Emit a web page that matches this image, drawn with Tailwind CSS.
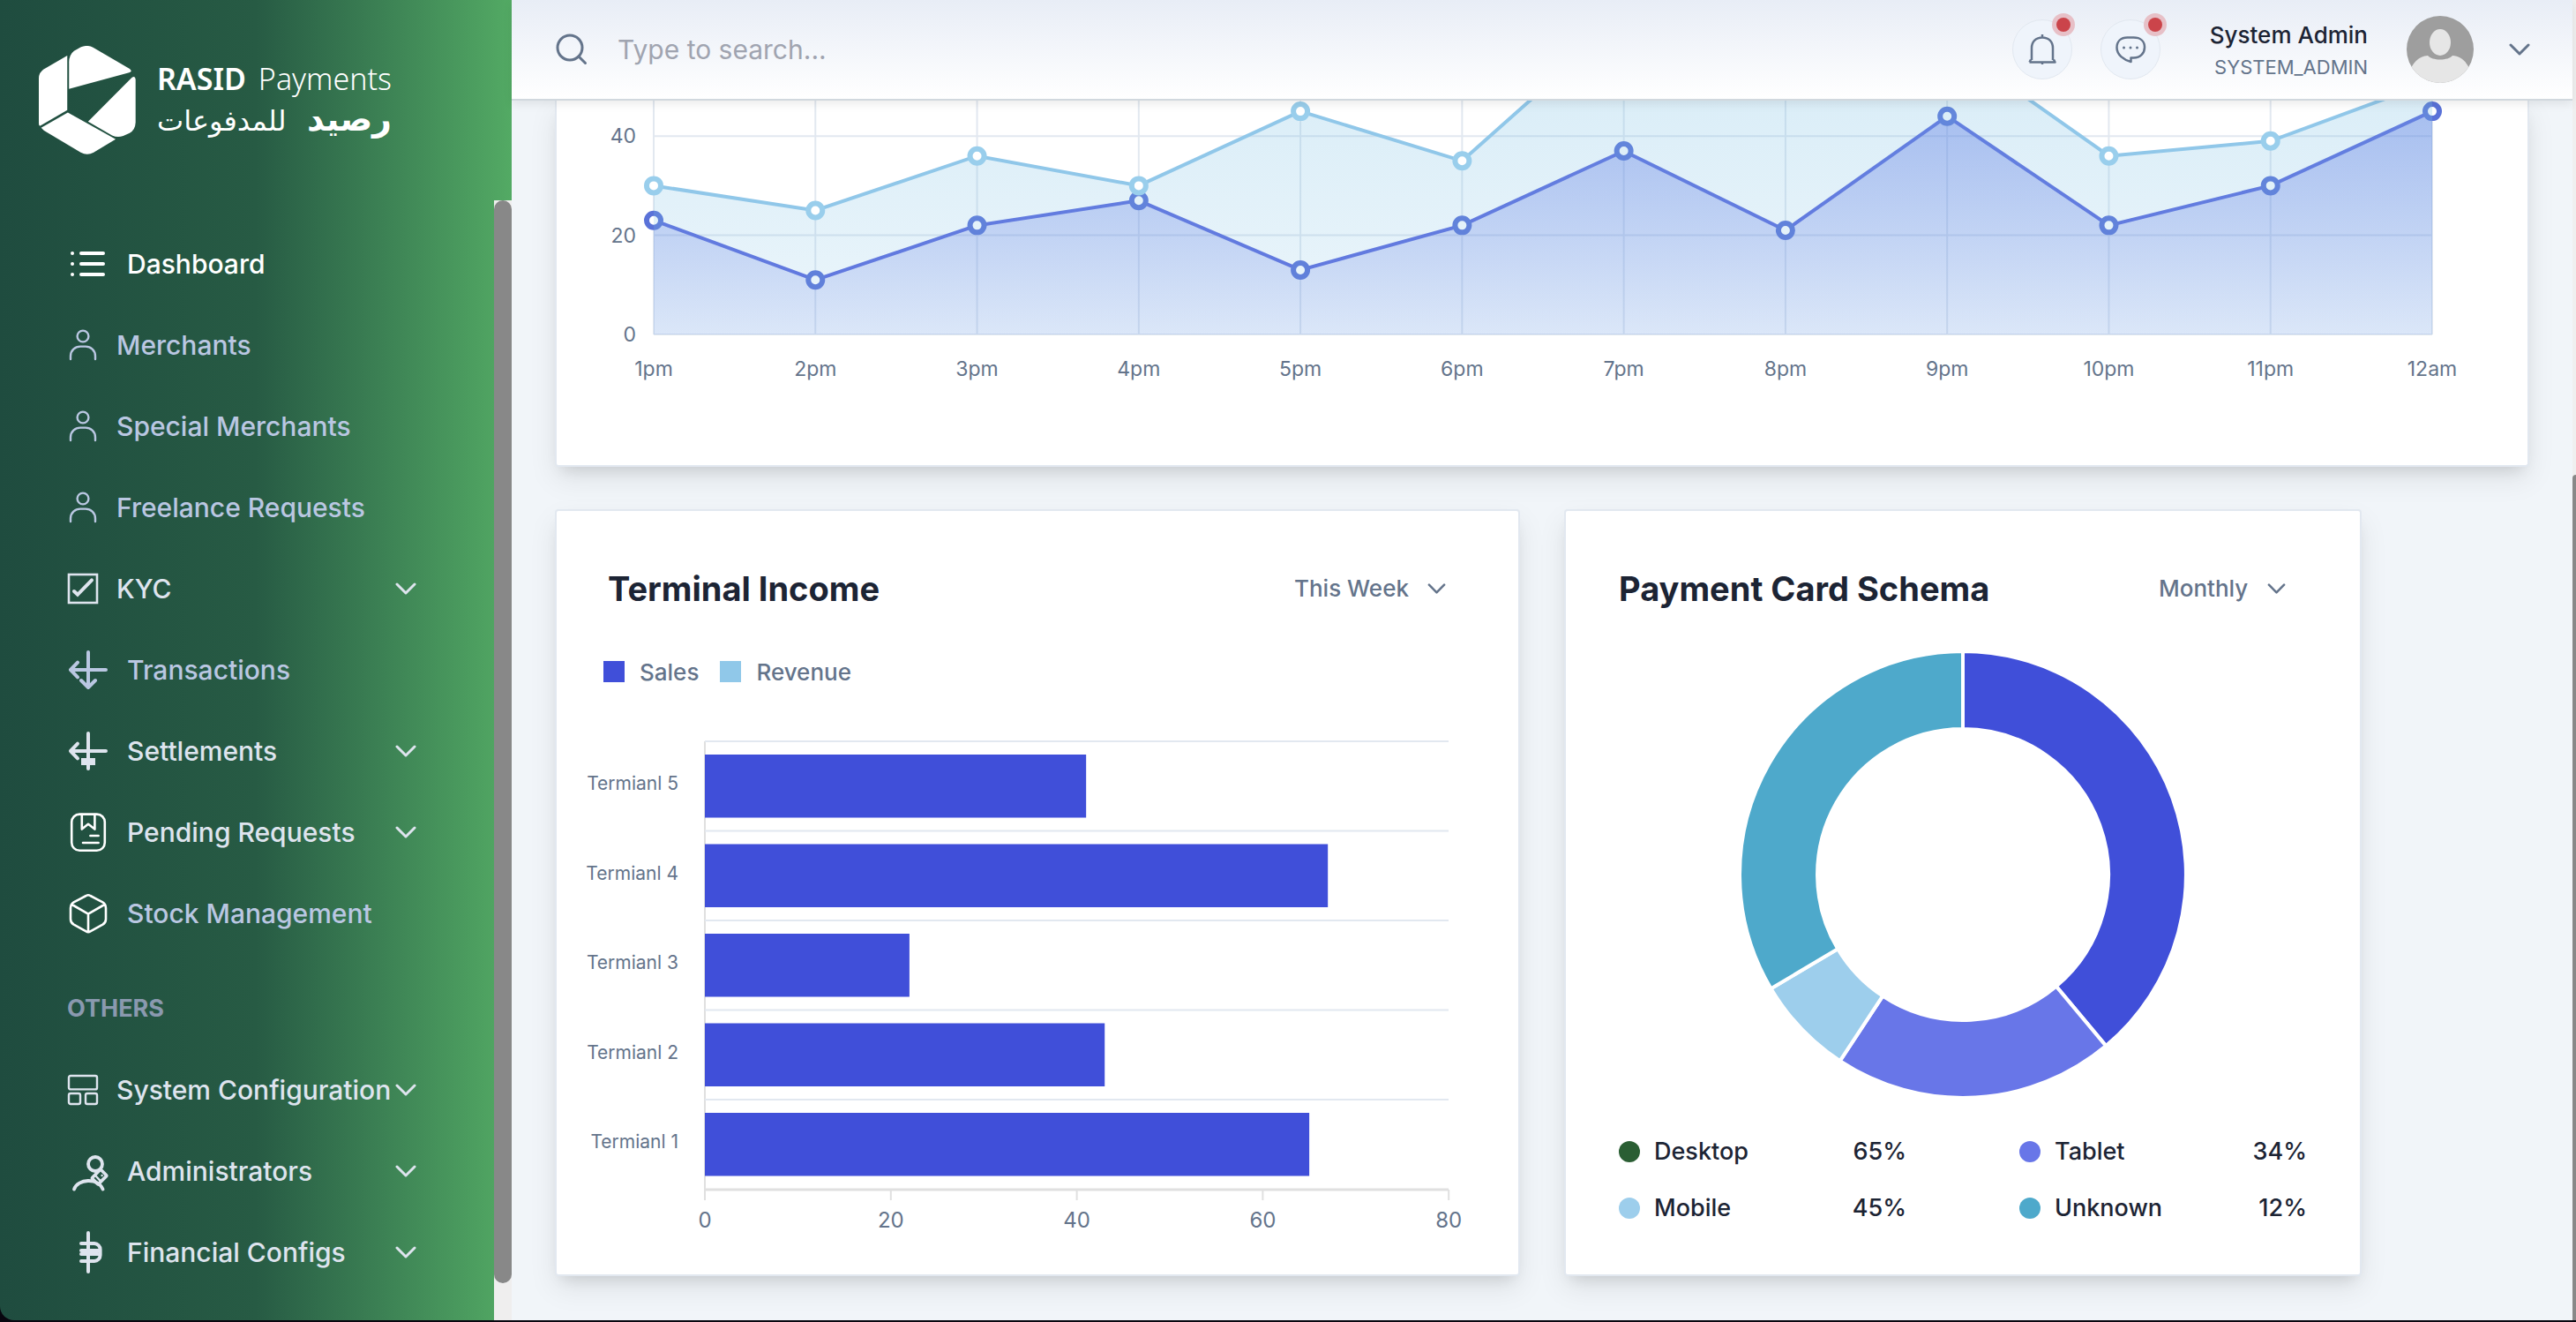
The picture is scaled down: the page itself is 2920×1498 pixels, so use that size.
<!DOCTYPE html>
<html lang="en">
<head>
<meta charset="utf-8">
<title>RASID Payments – Dashboard</title>
<script src="https://cdn.jsdelivr.net/npm/@tailwindcss/browser@4"></script>
</head>
<body class="bg-[#08060f] font-['Inter',sans-serif] text-[#1c2434]">
<svg class="hidden" aria-hidden="true">
  <symbol id="chevron" viewBox="0 0 24 14"><path d="M2 2l10 10L22 2" fill="none" stroke="currentColor" stroke-width="3" stroke-linecap="round" stroke-linejoin="round"/></symbol>
  <symbol id="person" viewBox="0 0 18 18"><g fill="none" stroke="currentColor" stroke-width="1.200" stroke-linecap="round"><circle cx="9" cy="4" r="3.200"/><path d="M2 17v-1.800C2 12 4.600 9.800 7.500 9.800h3c2.900 0 5.500 2.200 5.500 5.400V17"/></g></symbol>
</svg>

<div class="flex h-screen overflow-hidden pb-0.5">

  <!-- Sidebar -->
  <aside class="flex w-[580px] shrink-0 flex-col overflow-hidden rounded-bl-2xl bg-linear-to-r from-[#1f4c3f] via-[#275b44] to-[#53aa64]">
    <a href="#" class="flex h-[227px] shrink-0 items-start gap-6 pt-[52px] pl-[44px] text-white">
      <svg class="h-[123px] w-[110px]" viewBox="42 36 331 370" fill="currentColor" aria-hidden="true">
        <path d="M145 183V92Q145 66 162 53L186 40Q207 31 227 41L352 114Q362 122 350 127Z"/>
        <path d="M139 69V255L47 308Q42 310 42 300V147Q42 126 60 115Z"/>
        <path d="M50 315L141 263L304 354L229 399Q207 411 185 399L60 325Z"/>
        <path d="M210 294L359 144Q371 136 372 150V297Q371 322 352 333L330 343Q310 350 292 341Z"/>
      </svg>
      <span class="flex w-[266px] flex-col pt-[14px] font-['Noto_Sans',sans-serif]">
        <span class="flex justify-between text-[34px] leading-[46px] whitespace-nowrap"><b class="font-semibold">RASID</b><span class="font-light">Payments</span></span>
        <span lang="ar" dir="rtl" class="flex items-baseline justify-between font-['DejaVu_Sans',sans-serif] text-[32px] leading-[46px] whitespace-nowrap"><b class="text-[38px]">رصيد</b><span>للمدفوعات</span></span>
      </span>
    </a>

    <div class="flex min-h-0 flex-1">
      <nav class="flex-1 overflow-hidden pt-8 pr-[88px] pl-[76px] text-[30px] font-medium whitespace-nowrap text-[#dee4ee]">
        <ul class="flex flex-col gap-3">
          <li><a href="#" class="flex h-20 items-center gap-5 text-white">
            <svg class="size-12 shrink-0" viewBox="0 0 24 24" fill="none" stroke="currentColor" stroke-width="2" stroke-linecap="round"><path d="M8 6h12.500M8 12h12.500M8 18h12.500M3 6h.01M3 12h.01M3 18h.01"/></svg>
            Dashboard</a></li>
          <li><a href="#" class="flex h-20 items-center gap-5 text-[#bac7e2]"><svg class="size-9 shrink-0"><use href="#person"/></svg>Merchants</a></li>
          <li><a href="#" class="flex h-20 items-center gap-5 text-[#bac7e2]"><svg class="size-9 shrink-0"><use href="#person"/></svg>Special Merchants</a></li>
          <li><a href="#" class="flex h-20 items-center gap-5 text-[#bac7e2]"><svg class="size-9 shrink-0"><use href="#person"/></svg>Freelance Requests</a></li>
          <li><a href="#" class="flex h-20 items-center gap-5">
            <svg class="size-9 shrink-0" viewBox="0 0 18 18" fill="none" stroke="currentColor"><rect x="1" y="1" width="16" height="16" stroke-width="1.300"/><path d="M4 10.500l2 1.900 8-8.200" stroke-width="2" stroke-linecap="round"/></svg>
            KYC<svg class="ml-auto h-3.5 w-6 shrink-0"><use href="#chevron"/></svg></a></li>
          <li><a href="#" class="flex h-20 items-center gap-5 text-[#bac7e2]">
            <svg class="size-12 shrink-0" viewBox="0 0 24 24" fill="none" stroke="currentColor" stroke-width="2" stroke-linecap="round" stroke-linejoin="round"><path d="M12 2v20M2 12h20M6 7.800L2 12l4 4.200M8 18l4 4 4-4"/></svg>
            Transactions</a></li>
          <li><a href="#" class="flex h-20 items-center gap-5">
            <svg class="size-12 shrink-0" viewBox="0 0 24 24" fill="none" stroke="currentColor" stroke-width="2" stroke-linecap="round" stroke-linejoin="round"><path d="M12 2v20M2 12h20M6 7.800L2 12l4 4.200"/><path d="M8 16h8v4H8z" fill="currentColor" stroke="none"/></svg>
            Settlements<svg class="ml-auto h-3.5 w-6 shrink-0"><use href="#chevron"/></svg></a></li>
          <li><a href="#" class="flex h-20 items-center gap-5">
            <svg class="size-12 shrink-0" viewBox="0 0 24 24" fill="none" stroke="#fff" stroke-width="1.300" stroke-linecap="round" stroke-linejoin="round"><rect x="2.600" y="1.800" width="18.800" height="20.600" rx="4.500"/><path d="M8.400 2v8.300L12 7.400l3.700 2.900V2M13.200 14h4.600M9 18h8.800"/></svg>
            Pending Requests<svg class="ml-auto h-3.5 w-6 shrink-0"><use href="#chevron"/></svg></a></li>
          <li><a href="#" class="flex h-20 items-center gap-5 text-[#bac7e2]">
            <svg class="size-12 shrink-0" viewBox="0 0 24 24" fill="none" stroke="#fff" stroke-width="1.300" stroke-linecap="round" stroke-linejoin="round"><path d="M10.800 2Q12 1.300 13.200 2L20 5.600Q22 6.800 22 9v6.200q0 2-1.800 3.100L13.200 22.200Q12 22.900 10.800 22.200L3.800 18.300Q2 17.200 2 15.200V9Q2 6.800 4 5.600ZM2.800 7L12 12.300 21.200 7M12 12.300v10"/></svg>
            Stock Management</a></li>
        </ul>
        <h3 class="mt-12 mb-8 text-[27px] leading-10 font-bold text-[#8a99af]">OTHERS</h3>
        <ul class="flex flex-col gap-3">
          <li><a href="#" class="flex h-20 items-center justify-between">
            <span class="flex items-center gap-5"><svg class="size-9 shrink-0" viewBox="0 0 18 18" fill="none" stroke="currentColor" stroke-width="1.200"><rect x="1" y="1" width="16" height="7.700" rx="1"/><rect x="1" y="11" width="6.500" height="6" rx="1"/><rect x="10.500" y="11" width="6.500" height="6" rx="1"/></svg>
            System Configuration</span><svg class="h-3.5 w-6 shrink-0"><use href="#chevron"/></svg></a></li>
          <li><a href="#" class="flex h-20 items-center gap-5">
            <svg class="size-12 shrink-0" viewBox="0 0 24 24" fill="none" stroke="currentColor" stroke-width="1.900" stroke-linecap="round" stroke-linejoin="round"><circle cx="16" cy="8" r="4"/><path d="M4 22.300c2-6 13.500-6.800 16.300 0"/><rect x="14.800" y="12.800" width="7" height="5" rx=".500" transform="rotate(-45 18.300 15.300)" stroke-width="1.800"/><path d="M16.500 15l2.500 2.700M19.800 14.500v.01" stroke-width="1.200"/></svg>
            Administrators<svg class="ml-auto h-3.5 w-6 shrink-0"><use href="#chevron"/></svg></a></li>
          <li><a href="#" class="flex h-20 items-center gap-5">
            <svg class="size-12 shrink-0" viewBox="0 0 24 24" fill="none" stroke="currentColor" stroke-width="2" stroke-linecap="round" stroke-linejoin="round"><path d="M12 1v22M8 7h7.500a3.400 3.400 0 0 1 3.300 3.400V13.600A3.400 3.400 0 0 1 15.500 17H8M8 11h9.500M8 13h9.500"/></svg>
            Financial Configs<svg class="ml-auto h-3.5 w-6 shrink-0"><use href="#chevron"/></svg></a></li>
        </ul>
      </nav>
      <div class="w-5 shrink-0 bg-[#efeeee] pb-[42px]"><div class="h-full rounded-full bg-[#888]"></div></div>
    </div>
  </aside>

  <!-- Content -->
  <div class="flex min-w-0 flex-1 flex-col bg-[#f1f5f9]">
    <header class="relative z-10 flex h-[114px] shrink-0 items-center justify-between border-b-2 border-[#d1d8de] bg-linear-to-b from-[#e8edf6] to-white pr-12 pl-[50px] shadow-[0_4px_10px_rgba(0,0,0,0.08)]">
      <label class="flex items-center gap-[34px]">
        <svg class="size-9 shrink-0 text-[#64748b]" viewBox="0 0 36 36" fill="none" stroke="currentColor" stroke-width="3" stroke-linecap="round"><circle cx="16" cy="16" r="14"/><path d="M26 26l7.500 7.500"/></svg>
        <input type="text" aria-label="Search" placeholder="Type to search..." class="w-[600px] bg-transparent text-[30px] outline-none placeholder:text-[#a0a4b0]">
      </label>
      <div class="flex items-center">
        <button aria-label="Notifications" class="relative flex size-[68px] items-center justify-center rounded-full border border-[#e2e8f0] bg-[#eff4fb] text-[#64748b]">
          <svg class="size-9" viewBox="0 0 36 36" fill="none" stroke="currentColor" stroke-width="2.500" stroke-linejoin="round"><path d="M6 30V16.500C6 9 11 4.500 18 4.500S30 9 30 16.500V30M3.500 32.500h29l-1.500-3M5 29.500l-1.500 3M18 1v4M18 32v3"/></svg>
          <span class="absolute -top-2 -right-1 flex size-[26px] items-center justify-center rounded-full bg-[#e7c0c7]"><span class="size-4 rounded-full bg-[#cb444a]"></span></span>
        </button>
        <button aria-label="Messages" class="relative ml-8 flex size-[68px] items-center justify-center rounded-full border border-[#e2e8f0] bg-[#eff4fb] text-[#64748b]">
          <svg class="size-9" viewBox="0 0 36 36" fill="none" stroke="currentColor" stroke-width="2.500" stroke-linejoin="round"><path d="M14.500 4.500h7C29.500 4.500 34 9 34 15.500S29.500 27.500 21.500 27.500H18.500V32C10 29.500 2.500 24 2.500 16 2.500 9 7 4.500 14.500 4.500Z"/><path d="M10.500 16h.01M18 16h.01M25.500 16h.01" stroke-width="3" stroke-linecap="round"/></svg>
          <span class="absolute -top-2 -right-2 flex size-[26px] items-center justify-center rounded-full bg-[#e7c0c7]"><span class="size-4 rounded-full bg-[#cb444a]"></span></span>
        </button>
        <a href="#" class="ml-14 flex items-center">
          <span class="flex flex-col pt-1 text-right whitespace-nowrap">
            <span class="text-[26px] leading-9 font-medium">System Admin</span>
            <span class="text-[22px] leading-9 text-[#64748b]">SYSTEM_ADMIN</span>
          </span>
          <svg class="ml-11 size-[76px] rounded-full" viewBox="0 0 76 76" aria-hidden="true"><path fill="#9e9e9e" d="M0 0h76v76H0z"/><g fill="#e6e6e6"><ellipse cx="38" cy="30" rx="12" ry="15"/><path d="M2 68C6 52 14 46 24 45c5 6 23 6 28 0 10 1 18 7 22 23v8H2z"/></g></svg>
          <svg class="ml-10 h-3.5 w-6 text-[#64748b]"><use href="#chevron"/></svg>
        </a>
      </div>
    </header>

    <main class="flex min-h-0 flex-1 flex-col gap-12 overflow-hidden px-[49px]">
      <!-- Hourly totals -->
      <section class="shrink-0 rounded-b-sm border-2 border-t-0 border-[#e2e8f0] bg-white shadow-[0_10px_16px_-8px_rgba(0,0,0,0.13),0_14px_32px_rgba(0,0,0,0.08)]">
        <svg class="block h-auto w-full" viewBox="0 114 2234 413" font-size="23" fill="#64748b" role="img" aria-label="Hourly totals">
          <defs>
            <linearGradient id="blueFade" gradientUnits="userSpaceOnUse" x1="0" y1="126" x2="0" y2="379"><stop stop-color="#3c50e0" stop-opacity=".37"/><stop offset="1" stop-color="#3c50e0" stop-opacity=".1"/></linearGradient>
            <linearGradient id="skyFade" gradientUnits="userSpaceOnUse" x1="0" y1="19" x2="0" y2="379"><stop stop-color="#7cc0e4" stop-opacity=".32"/><stop offset="1" stop-color="#7cc0e4" stop-opacity=".15"/></linearGradient>
          </defs>
          <g id="hourly"></g>
        </svg>
      </section>

      <div class="grid shrink-0 grid-cols-[1094fr_904fr_140fr] gap-[50px]">
        <!-- Terminal income -->
        <section class="rounded-sm border-2 border-[#e2e8f0] bg-white pt-16 shadow-[0_10px_16px_-8px_rgba(0,0,0,0.13),0_14px_32px_rgba(0,0,0,0.08)]">
          <div class="flex items-center justify-between px-[58px]">
            <h2 class="text-[38px] leading-[48px] font-bold">Terminal Income</h2>
            <div class="relative text-[#64748b]">
              <select aria-label="Terminal income period" class="appearance-none bg-transparent pr-[66px] text-[26px] leading-[48px] font-medium outline-none"><option>This Week</option><option>Last Week</option></select>
              <svg class="pointer-events-none absolute top-[18px] right-6 h-3 w-[21px]"><use href="#chevron"/></svg>
            </div>
          </div>
          <ul class="mt-[50px] flex h-10 items-center gap-6 pl-[53px] text-[26px] font-medium text-[#64748b]">
            <li class="flex items-center gap-[17px]"><span class="size-6 bg-[#404fd9]"></span>Sales</li>
            <li class="flex items-center gap-[17px]"><span class="size-6 bg-[#90c8e9]"></span>Revenue</li>
          </ul>
          <svg class="block h-auto w-full" viewBox="0 0 1090 663" fill="#64748b" role="img" aria-label="Terminal income"><g id="terminals"></g></svg>
        </section>

        <!-- Card schema -->
        <section class="rounded-sm border-2 border-[#e2e8f0] bg-white px-[60px] pt-16 shadow-[0_10px_16px_-8px_rgba(0,0,0,0.13),0_14px_32px_rgba(0,0,0,0.08)]">
          <div class="flex items-center justify-between">
            <h2 class="text-[38px] leading-[48px] font-bold">Payment Card Schema</h2>
            <div class="relative text-[#64748b]">
              <select aria-label="Card schema period" class="appearance-none bg-transparent pr-[66px] text-[26px] leading-[48px] font-medium outline-none"><option>Monthly</option><option>Yearly</option></select>
              <svg class="pointer-events-none absolute top-[18px] right-6 h-3 w-[21px]"><use href="#chevron"/></svg>
            </div>
          </div>
          <svg class="mx-auto mt-12 block w-[504px] max-w-full" viewBox="-252 -252 504 504" stroke="#fff" stroke-width="4" role="img" aria-label="Share by card schema"><g id="donut"></g></svg>
          <dl class="mt-[42px] grid grid-cols-2 gap-x-32 gap-y-6 text-[27px] leading-10 font-medium">
            <div class="flex items-center"><span class="mr-4 size-6 rounded-full bg-[#2a5e33]"></span><dt class="flex-1">Desktop</dt><dd>65%</dd></div>
            <div class="flex items-center"><span class="mr-4 size-6 rounded-full bg-[#6876e8]"></span><dt class="flex-1">Tablet</dt><dd>34%</dd></div>
            <div class="flex items-center"><span class="mr-4 size-6 rounded-full bg-[#9dceec]"></span><dt class="flex-1">Mobile</dt><dd>45%</dd></div>
            <div class="flex items-center"><span class="mr-4 size-6 rounded-full bg-[#4ea9cb]"></span><dt class="flex-1">Unknown</dt><dd>12%</dd></div>
          </dl>
        </section>
      </div>
    </main>
  </div>

  <!-- Page scroll track -->
  <div class="w-1 shrink-0 bg-[#efefef] pt-[538px]"><div class="h-full rounded-tl bg-[#888]"></div></div>
</div>

<script>
  // Area chart
  const hours = ['1pm','2pm','3pm','4pm','5pm','6pm','7pm','8pm','9pm','10pm','11pm','12am'];
  const sales = [23,11,22,27,13,22,37,21,44,22,30,45];
  const revenue = [30,25,36,30,45,35,64,52,59,36,39,51];
  const px = i => 110 + i * 2016 / 11, py = v => 379 - v * 5.62;
  const series = (data, fade, line, dot) => {
    const pts = data.map((v, i) => px(i).toFixed(1) + ',' + py(v).toFixed(1)).join(' ');
    return `<polygon points="${px(0)},379 ${pts} ${px(11)},379" fill="url(#${fade})"/>` +
      `<polyline points="${pts}" fill="none" stroke="${line}" stroke-width="4"/>` +
      data.map((v, i) => `<circle cx="${px(i)}" cy="${py(v)}" r="8" fill="#fff" stroke="${dot}" stroke-width="6"/>`).join('');
  };
  let out = '';
  [0, 20, 40].forEach(v => {
    out += `<path d="M${px(0)} ${py(v)}H${px(11)}" stroke="#e2e8f0" stroke-width="2"/><text x="90" y="${py(v) + 8}" text-anchor="end">${v}</text>`;
  });
  hours.forEach((h, i) => {
    out += `<path d="M${px(i)} 100V379" stroke="#e2e8f0" stroke-width="2"/><text x="${px(i)}" y="426" text-anchor="middle">${h}</text>`;
  });
  out += series(sales, 'blueFade', '#5b69de', '#5a72d8') + series(revenue, 'skyFade', '#90c7e9', '#99ceec');
  document.getElementById('hourly').innerHTML = out;

  // Horizontal bars
  const bars = [['Termianl 5', 41], ['Termianl 4', 67], ['Termianl 3', 22], ['Termianl 2', 43], ['Termianl 1', 65]];
  const bx = v => 168 + v * 10.54;
  out = '<path d="M168 59V579" stroke="#e0e0e0" stroke-width="2"/>';
  bars.forEach(([name, v], i) => {
    const y = 59 + i * 101.5;
    out += `<path d="M168 ${y}H1011" stroke="#e2e8f0" stroke-width="2"/><rect x="168" y="${y + 15}" width="${bx(v) - 168}" height="71.5" fill="#404fd9"/><text x="138" y="${y + 55}" text-anchor="end" font-size="21">${name}</text>`;
  });
  out += '<path d="M168 567H1011" stroke="#e0e0e0" stroke-width="3"/>';
  [0, 20, 40, 60, 80].forEach(v => {
    out += `<path d="M${bx(v)} 567v12" stroke="#e0e0e0" stroke-width="2"/><text x="${bx(v)}" y="610" text-anchor="middle" font-size="24">${v}</text>`;
  });
  document.getElementById('terminals').innerHTML = out;

  // Donut
  const parts = [[65, '#404fd9'], [34, '#6876e8'], [12, '#9dceec'], [56, '#4ea9cb']];
  const at = (r, a) => (r * Math.sin(a)).toFixed(1) + ' ' + (-r * Math.cos(a)).toFixed(1);
  let a = 0; out = '';
  parts.forEach(([v, c]) => {
    const b = a + v / 167 * 2 * Math.PI;
    out += `<path fill="${c}" d="M${at(253, a)}A253 253 0 0 1 ${at(253, b)}L${at(165, b)}A165 165 0 0 0 ${at(165, a)}Z"/>`;
    a = b;
  });
  document.getElementById('donut').innerHTML = out;
</script>
</body>
</html>
